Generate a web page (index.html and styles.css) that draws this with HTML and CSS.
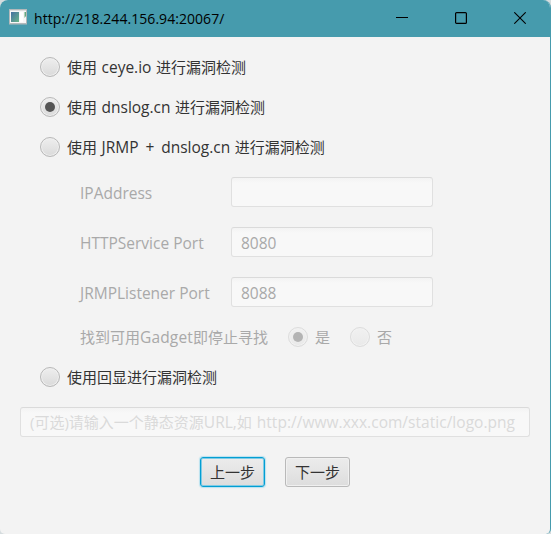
FILE: index.html
```html
<!DOCTYPE html>
<html lang="zh-CN">
<head>
<meta charset="utf-8">
<title>http://218.244.156.94:20067/</title>
<link rel="stylesheet" href="styles.css">
</head>
<body>
<div class="window">
  <header class="titlebar">
    <svg class="app-icon" width="18" height="16" viewBox="0 0 18 16">
      <defs><linearGradient id="app" x1="0" y1="0" x2="1" y2="1"><stop offset="0" stop-color="#4670a0"/><stop offset="1" stop-color="#69b58a"/></linearGradient></defs>
      <rect x="0" y="0" width="18" height="15.5" fill="#b3b9bb"/>
      <rect x="1" y="1" width="16" height="13" fill="#f7f7f7"/>
      <rect x="1" y="1" width="16" height="1" fill="#ddd"/>
      <rect x="2" y="3" width="8" height="10" fill="url(#app)"/>
      <rect x="11" y="3" width="3" height="10" fill="#fff"/>
      <path d="M15.5 3h1.5v4l-1.500 2z" fill="#67a87f"/>
    </svg>
    <h1 class="title">http://218.244.156.94:20067/</h1>
    <div class="controls">
      <svg width="12" height="12" viewBox="0 0 12 12"><path d="M0 5.5h12" stroke="#000"/></svg>
      <svg width="12" height="12" viewBox="0 0 12 12"><rect x=".6" y=".6" width="10.8" height="10.8" rx="1" fill="none" stroke="#000" stroke-width="1.2"/></svg>
      <svg width="12" height="12" viewBox="0 0 12 12"><path d="M.3.3l11.4 11.4M11.7.3L.3 11.7" stroke="#000" stroke-width="1.1"/></svg>
    </div>
  </header>
  <main class="content">
    <div class="option"><i class="radio"></i><span>使用 <span class="latin">ceye.io</span> 进行漏洞检测</span></div>
    <div class="option"><i class="radio checked"></i><span>使用 <span class="latin">dnslog.cn</span> 进行漏洞检测</span></div>
    <div class="option"><i class="radio"></i><span>使用 <span class="latin spaced">JRMP + dnslog.cn</span> 进行漏洞检测</span></div>
    <div class="settings disabled">
      <div class="field"><label class="latin">IPAddress</label><div class="input"></div></div>
      <div class="field"><label class="latin">HTTPService Port</label><div class="input latin">8080</div></div>
      <div class="field"><label class="latin">JRMPListener Port</label><div class="input latin">8088</div></div>
      <div class="choices">
        <span class="question">找到可用<span class="latin gadget">Gadget</span>即停止寻找</span>
        <div class="choice"><i class="radio checked"></i><span>是</span></div>
        <div class="choice"><i class="radio"></i><span>否</span></div>
      </div>
    </div>
    <div class="option"><i class="radio"></i><span>使用回显进行漏洞检测</span></div>
    <div class="input url disabled">(可选)请输入一个静态资源<span class="latin">URL,</span>如 <span class="latin link">http://www.xxx.com/static/logo.png</span></div>
    <div class="buttons"><button class="focused">上一步</button><button>下一步</button></div>
  </main>
</div>
</body>
</html>
```
FILE: styles.css
```css
* { box-sizing: border-box; }
body {
  margin: 0;
  height: 534px;
  overflow: hidden;
  background: #d5dcde;
  color: #333;
  font: 15px/20px "Open Sans", "Noto Sans CJK SC", sans-serif;
  white-space: nowrap;
}
.window {
  height: 534px;
  border-right: 1px solid #469bad;
  border-radius: 8px 8px 5px 5px;
  overflow: hidden;
  background: #f3f3f3;
}
.titlebar {
  display: flex;
  align-items: center;
  width: 551px;
  height: 37px;
  padding: 0 25px 1px 9px;
  background: #469bad;
  color: #000;
}
.app-icon { margin-right: 7px; margin-top: -2px; }
.title { margin: 0; padding-top: 1px; font-size: 14px; font-weight: 400; letter-spacing: .05px; }
.controls { display: flex; gap: 47px; margin-left: auto; }
.controls svg { display: block; }
.content { padding: 20px 20px 0; }
.latin { font-size: 15.5px; }
.option {
  display: flex;
  align-items: center;
  height: 20px;
  margin: 0 0 20px 20px;
}
.option > span { word-spacing: .6px; }
.option .spaced { word-spacing: 2.9px; }
.option > span, .choice > span { margin-left: 7px; }
.radio {
  flex: none;
  display: grid;
  place-items: center;
  width: 20px;
  height: 20px;
  border: 1px solid #b8b8b8;
  border-radius: 50%;
  background: linear-gradient(#eee, #dadada);
  box-shadow: inset 0 0 0 1px #f0f0f0;
}
.radio.checked::after {
  content: "";
  width: 10px;
  height: 10px;
  border-radius: 50%;
  background: #555;
}
.settings { padding-left: 60px; }
.disabled { color: #a9a9a9; }
.field { display: flex; align-items: center; height: 30px; margin-bottom: 20px; }
.field label { width: 151px; padding-top: 2px; }
.input {
  width: 202px;
  height: 30px;
  padding: 5px 9px;
  border: 1px solid #e0e0e0;
  border-top-color: #dadada;
  border-radius: 3px;
  background: linear-gradient(#f3f3f3, #f8f8f8 5px);
}
.choices { display: flex; align-items: center; height: 20px; margin-bottom: 20px; }
.question { width: 208px; }
.gadget { letter-spacing: .15px; }
.choice { display: flex; width: 62px; }
.disabled .radio { border-color: #dcdcdc; background: linear-gradient(#f1f1f1, #e9e9e9); box-shadow: inset 0 0 0 1px #f2f2f2; }
.disabled .radio.checked::after { background: #b4b4b4; }
.url { width: 510px; padding-top: 4px; color: #dadada; word-spacing: 1px; }
.link { letter-spacing: .03px; }
.buttons { display: flex; justify-content: center; gap: 20px; margin-top: 20px; }
button {
  width: 65px;
  height: 30px;
  padding: 0;
  border: 1px solid #b9b9b9;
  border-radius: 3px;
  background: linear-gradient(#ececec, #dddddd);
  box-shadow: inset 0 0 0 1px #f0f0f0;
  color: #333;
  font: inherit;
}
.focused { border-color: #039ed3; box-shadow: inset 0 0 0 1px #7fcbe5, 0 0 1px 1px #b9e2ef; }
```
